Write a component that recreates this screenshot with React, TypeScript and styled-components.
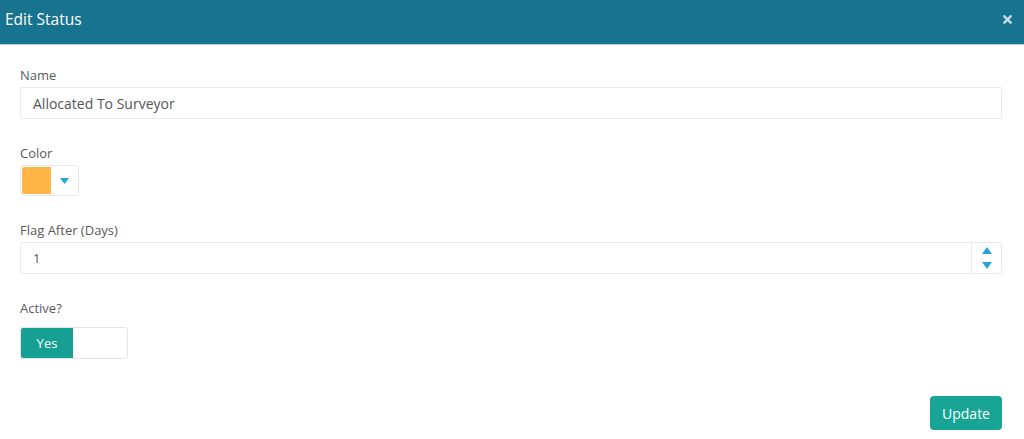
import styled, { createGlobalStyle } from "styled-components";
import { FaTimes } from "react-icons/fa";

const GlobalStyle = createGlobalStyle`
  body {
    margin: 0;
    background: #fff;
    font-family: "Open Sans", "Liberation Sans", sans-serif;
  }
`;

const App = () => {
  return (
    <>
      <GlobalStyle />
      <Modal>
        <Header>
          <Title>Edit Status</Title>
          <CloseBtn>
            <FaTimes size={13} />
          </CloseBtn>
        </Header>
        <Body>
          <Group $gap={25}>
            <Label>Name</Label>
            <TextInput>Allocated To Surveyor</TextInput>
          </Group>
          <Group $gap={25}>
            <Label>Color</Label>
            <Picker>
              <Swatch $color="#ffb446" />
              <Caret>
                <svg width="9" height="6" viewBox="0 0 9 6">
                  <path d="M0 0h9L4.5 6z" fill="#2aa3d6" />
                </svg>
              </Caret>
            </Picker>
          </Group>
          <Group $gap={25}>
            <Label>Flag After (Days)</Label>
            <NumberInput>
              <NumberValue>1</NumberValue>
              <Spinner>
                <svg width="10" height="7" viewBox="0 0 10 7">
                  <path d="M5 0l5 7H0z" fill="#2aa3d6" />
                </svg>
                <svg width="10" height="7" viewBox="0 0 10 7">
                  <path d="M0 0h10L5 7z" fill="#2aa3d6" />
                </svg>
              </Spinner>
            </NumberInput>
          </Group>
          <Group $gap={0}>
            <Label $mb={10}>Active?</Label>
            <Toggle>
              <ToggleOn>Yes</ToggleOn>
              <ToggleOff />
            </Toggle>
          </Group>
          <Footer>
            <UpdateBtn>Update</UpdateBtn>
          </Footer>
        </Body>
      </Modal>
    </>
  );
};

export default App;

const Modal = styled.div`
  width: 1024px;
  height: 439px;
  background: #fff;
  overflow: hidden;
`;

const Header = styled.div`
  height: 44px;
  background: #17738f;
  border-bottom: 1px solid #a9d6e2;
  display: flex;
  align-items: center;
  justify-content: space-between;
  padding: 0 10px 0 5px;
  box-sizing: content-box;
`;

const Title = styled.h4`
  margin: 0 0 6px;
  color: #fff;
  font-size: 15.5px;
  font-weight: 400;
`;

const CloseBtn = styled.span`
  color: #c6dde6;
  display: flex;
  margin-bottom: 6px;
`;

const Body = styled.div`
  padding: 21px 22px 0 20px;
`;

const Group = styled.div<{ $gap: number }>`
  margin-bottom: ${({ $gap }) => $gap}px;
`;

const Label = styled.div<{ $mb?: number }>`
  color: #5a5a5a;
  font-size: 13px;
  line-height: 18px;
  margin-bottom: ${({ $mb }) => $mb ?? 3}px;
`;

const TextInput = styled.div`
  height: 32px;
  border: 1px solid #e7e9ef;
  border-radius: 2px;
  box-sizing: border-box;
  padding: 0 12px;
  display: flex;
  align-items: center;
  font-size: 14px;
  color: #555;
`;

const Picker = styled.div`
  width: 59px;
  height: 31px;
  box-sizing: border-box;
  border: 1px solid #e7e9ef;
  border-radius: 3px;
  display: flex;
  align-items: stretch;
  padding: 1px;
`;

const Swatch = styled.div<{ $color: string }>`
  width: 29px;
  background: ${({ $color }) => $color};
  border-radius: 2px 0 0 2px;
`;

const Caret = styled.div`
  flex: 1;
  display: flex;
  align-items: center;
  justify-content: center;
`;

const NumberInput = styled.div`
  height: 32px;
  border: 1px solid #e7e9ef;
  border-radius: 3px;
  box-sizing: border-box;
  display: flex;
  align-items: stretch;
`;

const NumberValue = styled.div`
  flex: 1;
  display: flex;
  align-items: center;
  padding-left: 12px;
  font-size: 13px;
  color: #555;
`;

const Spinner = styled.div`
  width: 29px;
  border-left: 1px solid #e7e9ef;
  display: flex;
  flex-direction: column;
  align-items: center;
  justify-content: center;
  gap: 8px;
`;

const Toggle = styled.div`
  width: 108px;
  height: 32px;
  box-sizing: border-box;
  border: 1px solid #e3e5ea;
  border-radius: 3px;
  display: flex;
  overflow: hidden;
`;

const ToggleOn = styled.div`
  width: 52px;
  background: #15a093;
  color: #fff;
  font-size: 13px;
  display: flex;
  align-items: center;
  justify-content: center;
`;

const ToggleOff = styled.div`
  flex: 1;
  background: #fff;
`;

const Footer = styled.div`
  display: flex;
  justify-content: flex-end;
  margin-top: 37px;
`;

const UpdateBtn = styled.button`
  width: 72px;
  height: 34px;
  border: none;
  border-radius: 4px;
  background: #18a596;
  color: #fff;
  font-family: inherit;
  font-size: 14px;
  padding: 0;
`;
